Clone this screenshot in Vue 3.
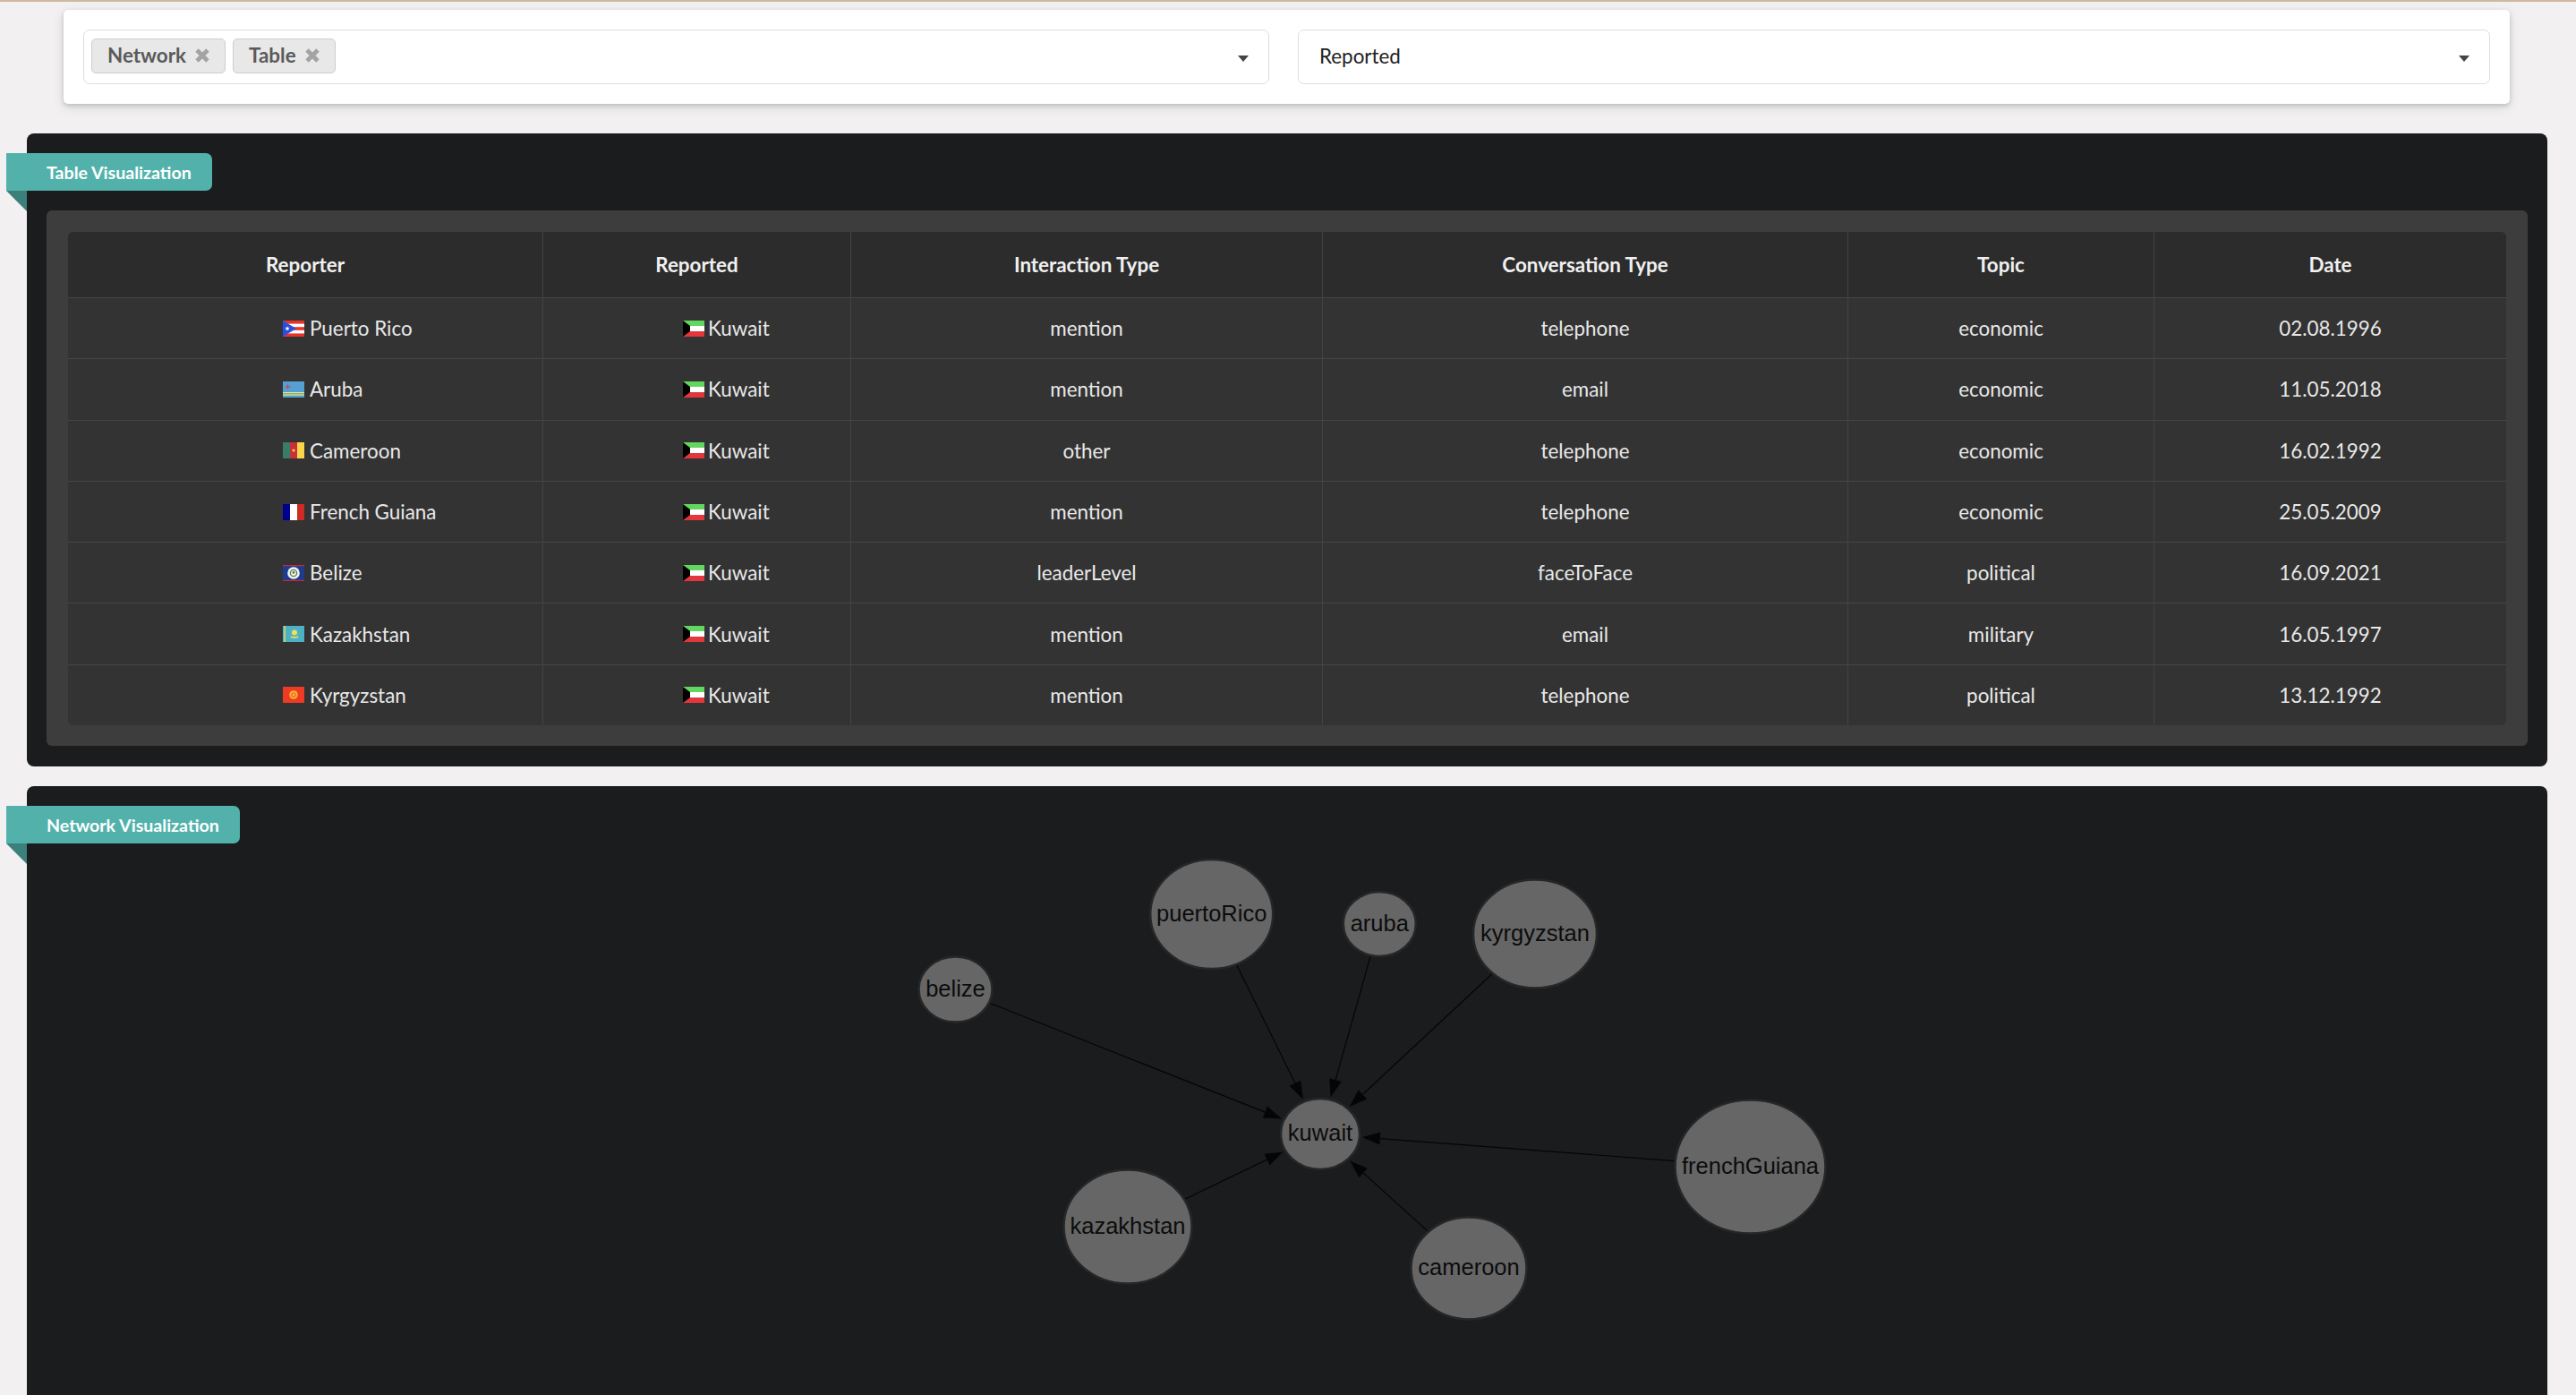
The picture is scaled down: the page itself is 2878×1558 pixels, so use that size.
<template>
  <div class="page">
    <!-- Filters -->
    <div class="filter-card">
      <div class="select multi">
        <span v-for="chip in chips" :key="chip" class="chip">
          <span class="chip-text">{{ chip }}</span>
          <svg class="chip-x" viewBox="0 0 18 18">
            <path d="M3 3 15 15M15 3 3 15" />
          </svg>
        </span>
        <i class="caret"></i>
      </div>
      <div class="select single">
        <span class="select-text">Reported</span>
        <i class="caret"></i>
      </div>
    </div>

    <!-- Table panel -->
    <section class="panel">
      <div class="ribbon">Table Visualization</div>
      <div class="inner">
        <table>
          <colgroup>
            <col v-for="w in colWidths" :key="w" :style="{ width: w + 'px' }" />
          </colgroup>
          <thead>
            <tr>
              <th v-for="h in headers" :key="h">{{ h }}</th>
            </tr>
          </thead>
          <tbody>
            <tr v-for="row in rows" :key="row.name">
              <td class="country">
                <div class="country-in">
                  <svg class="flag" viewBox="0 0 24 18">
                    <template v-if="row.flag === 'pr'">
                      <rect width="24" height="18" fill="#e5352b" />
                      <rect y="3.6" width="24" height="3.6" fill="#fff" />
                      <rect y="10.8" width="24" height="3.6" fill="#fff" />
                      <path d="M0 0 15 9 0 18Z" fill="#2750e0" />
                      <circle cx="5" cy="9" r="1.8" fill="#fff" />
                    </template>
                    <template v-else-if="row.flag === 'aw'">
                      <rect width="24" height="18" fill="#569fd3" />
                      <rect y="12" width="24" height="1.2" fill="#f7ec5c" />
                      <rect y="14.4" width="24" height="1.2" fill="#f7ec5c" />
                      <path d="M5.5 2 6.2 5.3 9.5 6 6.2 6.7 5.5 10 4.8 6.7 1.5 6 4.8 5.3Z" fill="#c9434a" />
                    </template>
                    <template v-else-if="row.flag === 'cm'">
                      <rect width="8" height="18" fill="#387d65" />
                      <rect x="8" width="8" height="18" fill="#c8303a" />
                      <rect x="16" width="8" height="18" fill="#f8d64b" />
                      <circle cx="12" cy="9" r="1.5" fill="#f8d64b" />
                    </template>
                    <template v-else-if="row.flag === 'gf'">
                      <rect width="8" height="18" fill="#00008f" />
                      <rect x="8" width="8" height="18" fill="#fff" />
                      <rect x="16" width="8" height="18" fill="#cf2b24" />
                    </template>
                    <template v-else-if="row.flag === 'bz'">
                      <rect width="24" height="18" fill="#1f3b8e" />
                      <rect width="24" height="1.2" fill="#c8283c" />
                      <rect y="16.8" width="24" height="1.2" fill="#c8283c" />
                      <circle cx="12" cy="9" r="6.8" fill="#f3f3ee" />
                      <circle cx="12" cy="9" r="3.6" fill="none" stroke="#4c8a58" stroke-width="1.4" />
                      <circle cx="12" cy="8.4" r="1.3" fill="#8a5a3c" />
                    </template>
                    <template v-else-if="row.flag === 'kz'">
                      <rect width="24" height="18" fill="#4db1c4" />
                      <rect x="1.4" width="1.4" height="18" fill="#e6d85c" />
                      <circle cx="13" cy="7.5" r="3" fill="#f2de5a" />
                      <path d="M8 12.2Q13 15.2 18 12.2L16.5 11.4Q13 12.6 9.5 11.4Z" fill="#f2de5a" />
                    </template>
                    <template v-else>
                      <rect width="24" height="18" fill="#ef3a24" />
                      <circle cx="12" cy="9" r="4.8" fill="#f6b132" />
                      <circle cx="12" cy="9" r="2.6" fill="#ee5a2a" />
                      <circle cx="12" cy="9" r="1.4" fill="#f6c84a" />
                    </template>
                  </svg>
                  <span>{{ row.name }}</span>
                </div>
              </td>
              <td class="country">
                <div class="country-in kw">
                  <svg class="flag" viewBox="0 0 24 18">
                    <rect width="24" height="6" fill="#62d65e" />
                    <rect y="6" width="24" height="6" fill="#fff" />
                    <rect y="12" width="24" height="6" fill="#e3373d" />
                    <path d="M0 0 8 6V12L0 18Z" fill="#000" />
                  </svg>
                  <span>Kuwait</span>
                </div>
              </td>
              <td>{{ row.interaction }}</td>
              <td>{{ row.conversation }}</td>
              <td>{{ row.topic }}</td>
              <td>{{ row.date }}</td>
            </tr>
          </tbody>
        </table>
      </div>
    </section>

    <!-- Network panel -->
    <section class="panel network">
      <div class="ribbon">Network Visualization</div>
      <svg class="graph" viewBox="30 878 2816 700">
        <g v-for="e in edges" :key="e.id">
          <line :x1="e.x1" :y1="e.y1" :x2="e.x2" :y2="e.y2" class="edge" />
          <polygon :points="e.head" class="arrow" />
        </g>
        <g v-for="n in nodes" :key="n.id">
          <ellipse :cx="n.x" :cy="n.y" :rx="n.rx" :ry="n.ry" class="node" />
          <text :x="n.x" :y="n.y + 7.5" class="node-label">{{ n.id }}</text>
        </g>
      </svg>
    </section>
  </div>
</template>

<script setup>
import { computed } from "vue";

const chips = ["Network", "Table"];
const headers = ["Reporter", "Reported", "Interaction Type", "Conversation Type", "Topic", "Date"];
const colWidths = [531, 344, 527, 587, 342, 393];

const rows = [
  { flag: "pr", name: "Puerto Rico", interaction: "mention", conversation: "telephone", topic: "economic", date: "02.08.1996" },
  { flag: "aw", name: "Aruba", interaction: "mention", conversation: "email", topic: "economic", date: "11.05.2018" },
  { flag: "cm", name: "Cameroon", interaction: "other", conversation: "telephone", topic: "economic", date: "16.02.1992" },
  { flag: "gf", name: "French Guiana", interaction: "mention", conversation: "telephone", topic: "economic", date: "25.05.2009" },
  { flag: "bz", name: "Belize", interaction: "leaderLevel", conversation: "faceToFace", topic: "political", date: "16.09.2021" },
  { flag: "kz", name: "Kazakhstan", interaction: "mention", conversation: "email", topic: "military", date: "16.05.1997" },
  { flag: "kg", name: "Kyrgyzstan", interaction: "mention", conversation: "telephone", topic: "political", date: "13.12.1992" },
];

const hub = { id: "kuwait", x: 1475, y: 1266.5, rx: 44, ry: 39.5 };
const others = [
  { id: "puertoRico", x: 1353.7, y: 1021, rx: 68.5, ry: 61 },
  { id: "belize", x: 1067.5, y: 1105, rx: 41, ry: 36.5 },
  { id: "aruba", x: 1541.3, y: 1032, rx: 40.5, ry: 36 },
  { id: "kyrgyzstan", x: 1715, y: 1043, rx: 69, ry: 60.5 },
  { id: "frenchGuiana", x: 1955.5, y: 1303, rx: 84, ry: 74.5 },
  { id: "kazakhstan", x: 1260, y: 1370, rx: 71.5, ry: 63.5 },
  { id: "cameroon", x: 1641, y: 1416.5, rx: 64.5, ry: 57 },
];
const nodes = [hub, ...others];

// point where the ray towards (tx, ty) leaves the ellipse
const rim = (n, tx, ty, extra) => {
  const dx = tx - n.x;
  const dy = ty - n.y;
  const t = 1 / Math.hypot(dx / (n.rx + extra), dy / (n.ry + extra));
  return [n.x + dx * t, n.y + dy * t];
};

const edges = computed(() =>
  others.map((n) => {
    const [x1, y1] = rim(n, hub.x, hub.y, 1);
    const [tipX, tipY] = rim(hub, n.x, n.y, 3);
    const len = Math.hypot(x1 - tipX, y1 - tipY);
    const ux = (x1 - tipX) / len;
    const uy = (y1 - tipY) / len;
    const bx = tipX + ux * 20;
    const by = tipY + uy * 20;
    const head = [
      [tipX, tipY],
      [bx - uy * 7, by + ux * 7],
      [bx + uy * 7, by - ux * 7],
    ]
      .map((p) => p.join(","))
      .join(" ");
    return { id: n.id, x1, y1, x2: bx, y2: by, head };
  })
);
</script>

<style>
html,
body {
  margin: 0;
  background: #f2f0f1;
}
</style>

<style scoped>
.page {
  height: 100vh;
  box-sizing: border-box;
  overflow: hidden;
  border-top: 2px solid #cfb89c;
  background: #f2f0f1;
  font-family: Lato, "Open Sans", sans-serif;
  font-size: 22.4px;
}

/* Filter card */
.filter-card {
  display: flex;
  gap: 32px;
  box-sizing: border-box;
  height: 105px;
  margin: 9px 74px 33px 71px;
  padding: 22px 22px 22px 22px;
  background: #fff;
  border-radius: 5px;
  box-shadow: 0 2px 5px rgba(34, 36, 38, 0.2), 0 4px 14px rgba(34, 36, 38, 0.1);
}

.select {
  position: relative;
  box-sizing: border-box;
  height: 61px;
  display: flex;
  align-items: center;
  background: #fff;
  border: 1px solid #dededf;
  border-radius: 7px;
}

.multi {
  width: 1325px;
  gap: 8px;
  padding: 0 0 3px 8px;
}

.single {
  flex: 1;
  padding: 0 0 1px 23px;
}

.select-text {
  color: #222;
  line-height: 1;
}

.chip {
  display: flex;
  align-items: center;
  gap: 9px;
  box-sizing: border-box;
  height: 39px;
  padding: 0 16px 0 17px;
  background: #e8e8e8;
  border: 1px solid #cdcdcd;
  border-radius: 5px;
  color: #5a5a5a;
  font-weight: 700;
}

.chip-text {
  margin-top: -2px;
}

.chip-x {
  width: 18px;
  height: 18px;
  fill: none;
  stroke: #a3a3a3;
  stroke-width: 4.8;
}

.caret {
  position: absolute;
  right: 22px;
  top: 28px;
  width: 0;
  height: 0;
  border-left: 6px solid transparent;
  border-right: 6px solid transparent;
  border-top: 7px solid #444;
}

/* Panels */
.panel {
  position: relative;
  box-sizing: border-box;
  margin: 0 32px 22px 30px;
  padding: 86px 22px 23px;
  background: #1b1c1d;
  border-radius: 8px;
}

.network {
  height: 700px;
  padding: 0;
  margin-bottom: 0;
}

.ribbon {
  position: absolute;
  left: -23px;
  top: 22px;
  box-sizing: border-box;
  height: 42px;
  padding: 0 23px 0 45px;
  display: flex;
  align-items: center;
  background: #52b2ab;
  border-radius: 0 7px 7px 0;
  color: #fff;
  font-size: 19.6px;
  font-weight: 700;
}

.ribbon::after {
  content: "";
  position: absolute;
  left: 0;
  top: 100%;
  border-top: 0 solid transparent;
  border-right: 23px solid #3b807b;
  border-bottom: 23px solid transparent;
}

.inner {
  padding: 24px 23px 23px 24px;
  background: #3d3d3d;
  border-radius: 6px;
}

table {
  width: 2724px;
  table-layout: fixed;
  border-collapse: separate;
  border-spacing: 0;
  border-radius: 6px;
  overflow: hidden;
  background: #333;
  color: #e8e8e8;
}

th {
  height: 73px;
  padding: 0;
  background: #2c2c2c;
  color: #f0f0f0;
  font-weight: 700;
  text-align: center;
  border-right: 1px solid #434343;
}

td {
  box-sizing: border-box;
  height: 68.3px;
  padding: 0;
  text-align: center;
  border-top: 1px solid #464646;
  border-right: 1px solid #434343;
}

th:last-child,
td:last-child {
  border-right: none;
}

.country-in {
  display: flex;
  align-items: center;
  gap: 6px;
  padding-left: 240px;
}

.country-in.kw {
  gap: 4px;
  padding-left: 156px;
}

.flag {
  flex: none;
  width: 24px;
  height: 18px;
}

/* Network graph */
.graph {
  display: block;
  width: 2816px;
  height: 700px;
}

.edge {
  stroke: #050505;
  stroke-width: 1.2;
}

.arrow {
  fill: #050505;
}

.node {
  fill: #666;
  stroke: #262728;
  stroke-width: 2.5;
}

.node-label {
  fill: #0c0c0c;
  font-family: "Liberation Sans", Arial, sans-serif;
  font-size: 25.5px;
  text-anchor: middle;
}
</style>
